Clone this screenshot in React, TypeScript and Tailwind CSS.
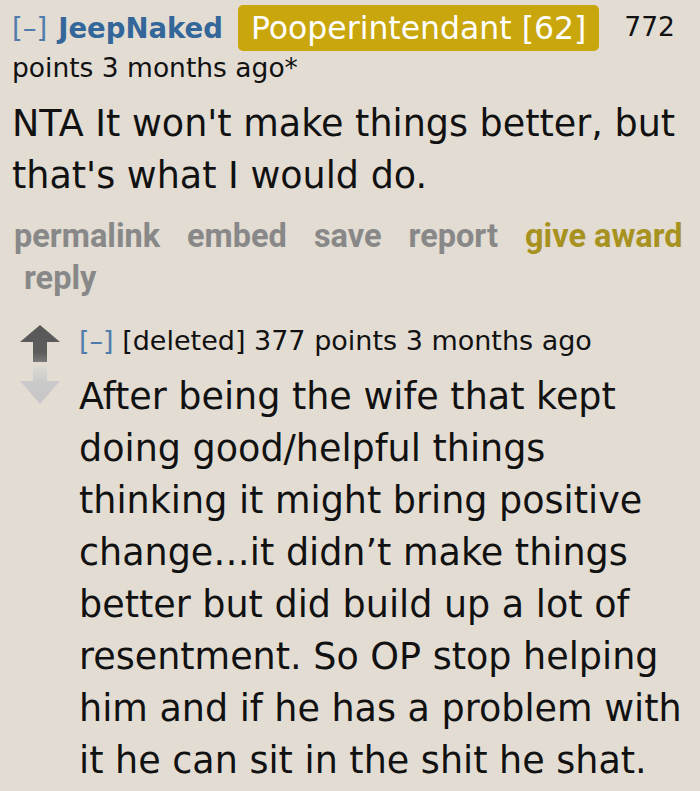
import React from 'react';

const UpArrow: React.FC = () => (
  <svg width="40" height="37" viewBox="0 0 40 37">
    <defs>
      <linearGradient id="upg" x1="0" y1="0" x2="0" y2="1">
        <stop offset="0" stopColor="#585858" />
        <stop offset="0.75" stopColor="#5c5c5c" />
        <stop offset="1" stopColor="#7a7a7a" />
      </linearGradient>
    </defs>
    <path d="M20 0 L40 17 L27 17 L27 37 L13 37 L13 17 L0 17 Z" fill="url(#upg)" />
  </svg>
);

const DownArrow: React.FC = () => (
  <svg width="40" height="38" viewBox="0 0 40 38">
    <defs>
      <linearGradient id="dng" x1="0" y1="0" x2="0" y2="1">
        <stop offset="0" stopColor="#dedad4" />
        <stop offset="0.4" stopColor="#cacaca" />
        <stop offset="1" stopColor="#c6c6c6" />
      </linearGradient>
    </defs>
    <path d="M13 0 L27 0 L27 15 L40 15 L20 38 L0 15 L13 15 Z" fill="url(#dng)" />
  </svg>
);

export default function App() {
  return (
    <div className="min-h-[791px] w-[700px] bg-[#e2dcd3] text-[#111] overflow-hidden font-['DejaVu_Sans',Verdana,sans-serif]">
      {/* parent comment */}
      <div className="pl-3 pt-[5px]">
        <div className="flex items-center text-[27.5px] leading-[30px]">
          <span className="text-[#4f7cab]">[–]</span>
          <span className="ml-[11px] font-bold text-[#336699]">JeepNaked</span>
          <span className="ml-[15px] rounded-[5px] bg-[#c9a60b] px-[13px] h-[46px] flex items-center text-[31.5px] text-white">
            Pooperintendant [62]
          </span>
          <span className="ml-[25px] -mt-[3px] text-[26.5px]">772</span>
        </div>
        <div className="text-[26.5px] leading-[30px] mt-[2px]">points 3 months ago*</div>
        <div className="mt-[15px] text-[36.5px] leading-[52px]">
          NTA It won't make things better, but
          <br />
          that's what I would do.
        </div>
        <div className="mt-[13px] flex flex-wrap gap-x-[27px] text-[32.5px] leading-[42px] font-bold text-[#888888] font-['Roboto',sans-serif]">
          <span className="ml-[2px]">permalink</span>
          <span>embed</span>
          <span>save</span>
          <span>report</span>
          <span className="text-[#a8921f]">give award</span>
          <span className="ml-[12px]">reply</span>
        </div>
      </div>

      {/* child comment */}
      <div className="flex pl-[20px] pt-[24px]">
        <div className="flex flex-col items-center w-[40px] pt-[2px] gap-[4px]">
          <UpArrow />
          <DownArrow />
        </div>
        <div className="ml-[19px]">
          <div className="text-[27px] leading-[36px]">
            <span className="text-[#4f7cab]">[–]</span> [deleted] 377 points 3 months ago
          </div>
          <div className="text-[36.5px] leading-[52px] mt-[12px]">
            After being the wife that kept
            <br />
            doing good/helpful things
            <br />
            thinking it might bring positive
            <br />
            change…it didn’t make things
            <br />
            better but did build up a lot of
            <br />
            resentment. So OP stop helping
            <br />
            him and if he has a problem with
            <br />
            it he can sit in the shit he shat.
          </div>
        </div>
      </div>
    </div>
  );
}
